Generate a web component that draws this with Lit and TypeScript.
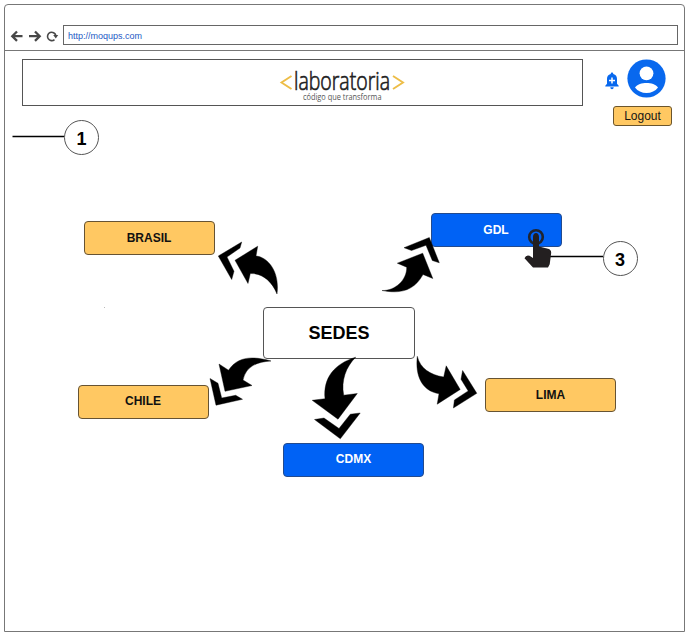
import { LitElement, html, css, svg } from "lit";
import { customElement } from "lit/decorators.js";
import { styleMap } from "lit/directives/style-map.js";

interface Box { label: string; kind: string; x: number; y: number; w: number; h: number; }

// Diagram coordinates are window coordinates; the canvas begins at this origin.
const ORIGIN = { x: 5, y: 127 };

const BOXES: Box[] = [
  { label: "BRASIL", kind: "amber", x: 83.5, y: 221, w: 131, h: 34 },
  { label: "GDL", kind: "blue", x: 430.5, y: 213, w: 131, h: 34 },
  { label: "SEDES", kind: "hub", x: 263, y: 307, w: 152, h: 52 },
  { label: "CHILE", kind: "amber", x: 77.5, y: 384.5, w: 131, h: 34 },
  { label: "LIMA", kind: "amber", x: 485, y: 378, w: 131, h: 34 },
  { label: "CDMX", kind: "blue", x: 283, y: 442.5, w: 141, h: 34 },
  { label: "1", kind: "step", x: 64, y: 120, w: 35, h: 35 },
  { label: "3", kind: "step", x: 602.5, y: 240.5, w: 35, h: 35 },
];

const ARROWS = [
  "M218.300 256L241.700 242L240 248L227 257L234 271.300L231.700 279.500zM235 260.300L257.700 246.200L256 256C268 257 280 272 277 294C272 281 262 273 250.300 273.500L248 283.500z",
  "M429.300 237.500L404 247.700L411.500 250.500L426 245.300L432.300 260.500L439.300 262.800zM422.700 253.200L397.300 263.200L406.700 267.200C407 280 395 291 382 290.500C400 294 414 291 423 274.500L432.800 278.500z",
  "M210 378.500L216 405.200L242.500 399.300L235.700 395.300L221.700 398L218 383.300zM225 391.300L219 364L228.500 370.200C238 356 253 356 271 361C257 362 246 366 243 380L252 385.500z",
  "M340.300 438.800L314.500 419.500L324 418L339 428.500L350.300 414.200L360.200 413zM338 419.200L312.200 400.300L325 398.700C323 378 334 364 355.700 357.200C346 367 341 380 343.700 395.200L357.300 393.500z",
  "M476.800 393.300L462.600 370.500L461 379.300L468.200 390.900L454.400 400L453.400 408zM460.200 389.500L446.200 365.800L443.700 377C430 375 420 368 417.300 356.300C415 376 422 391 439 393.700L437.200 404.200z",
];

@customElement("app-root")
export class AppRoot extends LitElement {
  static styles = css`
    :host {
      display: block;
      box-sizing: border-box;
      width: 691px;
      height: 641px;
      padding: 4px 0 0 4px;
      background: #fff;
      overflow: hidden;
      font-family: "Liberation Sans", Arial, sans-serif;
    }
    * { box-sizing: border-box; }
    svg { display: block; overflow: visible; }
    .window {
      width: 681px;
      height: 628px;
      border: 1px solid #777;
      border-radius: 4px 4px 0 0;
      display: flex;
      flex-direction: column;
    }
    .toolbar {
      height: 46px;
      flex: none;
      display: flex;
      align-items: flex-end;
      padding: 0 6px 5px 6px;
      border-bottom: 1px solid #777;
    }
    .nav { margin: 0 5px 2px 0; }
    .url {
      flex: 1;
      height: 20px;
      border: 1px solid #666;
      padding-left: 4px;
      font-size: 9px;
      line-height: 20px;
      color: #2459c5;
    }
    .header {
      height: 76px;
      flex: none;
      display: flex;
      padding: 8px 0 0 17px;
    }
    .brand {
      width: 561px;
      height: 47px;
      border: 1px solid #555;
    }
    .logo { font-family: "Open Sans", "Noto Sans", sans-serif; }
    .account {
      width: 67px;
      margin-left: 22px;
      display: flex;
      flex-direction: column;
      align-items: flex-end;
    }
    .icons { display: flex; gap: 8px; align-items: center; margin-right: 6px; }
    .bell { margin-top: 5px; }
    .logout {
      width: 59px;
      height: 20px;
      margin-top: 8px;
      border: 1px solid #6b552c;
      border-radius: 3px;
      background: #ffc862;
      font-size: 12px;
      line-height: 18px;
      text-align: center;
      color: #151515;
    }
    .canvas { position: relative; flex: 1; }
    .ink { position: absolute; inset: 0; pointer-events: none; }
    .node {
      position: absolute;
      display: flex;
      align-items: center;
      justify-content: center;
      border: 1px solid #555;
      border-radius: 4px;
      font-size: 12px;
      font-weight: bold;
      color: #111;
      background: #fff;
    }
    .amber { background: #ffc862; border-color: #665333; padding-bottom: 1px; }
    .blue { background: #0062f5; border-color: #234b8e; color: #fff; padding-bottom: 1px; }
    .hub { font-size: 18px; color: #000; }
    .step { border-radius: 50%; font-size: 18px; padding-top: 4px; color: #000; }
  `;

  render() {
    return html`
      <div class="window">
        <div class="toolbar">
          <svg class="nav" width="47" height="14" viewBox="11 28 47 14" fill="none" stroke="#484848" stroke-width="2.3">
            <path d="M22.500 35.200H12.500M17 30.500L12.300 35.200l4.700 4.700" />
            <path d="M29 35.200h10.500M35 30.500l4.700 4.700-4.700 4.700" />
            <path stroke-width="1.600" d="M54.500 38.600A4.200 4.200 0 1 1 55.800 34.500" />
            <path fill="#484848" stroke="none" d="M53.200 34h5l-2.400 3.500z" />
          </svg>
          <div class="url">http://moqups.com</div>
        </div>
        <div class="header">
          <div class="brand">
            <svg class="logo" width="559" height="45" viewBox="23 60 559 45">
              <g fill="none" stroke="#edbd47" stroke-width="1.900">
                <path d="M291.500 76L281.500 82.500l10 6.500" />
                <path d="M393 76l10 6.500-10 6.500" />
              </g>
              <text x="294" y="89.600" font-size="25.500" font-weight="300" textLength="96"
                lengthAdjust="spacingAndGlyphs" fill="#222" stroke="#222" stroke-width=".7">laboratoria</text>
              <text x="303" y="100" font-size="8.200" textLength="78.500" lengthAdjust="spacingAndGlyphs"
                fill="#555">código que transforma</text>
            </svg>
          </div>
          <div class="account">
            <div class="icons">
              <svg class="bell" width="14" height="18" viewBox="0 0 14 18">
                <path fill="#0868ee" d="M7 .5c.9 0 1.300.6 1.300 1.600C10.900 2.800 12 4.600 12 7v4.700l1.700 2v.9H.3v-.9l1.700-2V7c0-2.400 1.100-4.200 3.700-4.900C5.700 1.100 6.100.5 7 .5zM5.300 15.300h3.400C8.700 17.900 5.300 17.900 5.300 15.300z" />
                <path stroke="#fff" stroke-width="1.500" d="M7 5.500v6M4 8.500h6" />
              </svg>
              <svg width="39" height="39" viewBox="0 0 39 39">
                <circle cx="19.500" cy="19.500" r="19.100" fill="#0868ee" />
                <circle cx="19.500" cy="14.300" r="6.900" fill="#fff" />
                <path fill="#fff" d="M8 28.500C10 25.300 15 24 19.500 24s9.500 1.300 11.500 4.500C28.300 32.100 24.300 34 19.500 34S10.700 32.100 8 28.500z" />
              </svg>
            </div>
            <div class="logout">Logout</div>
          </div>
        </div>
        <div class="canvas">
          ${BOXES.map((b) => html`<div class="node ${b.kind}" style=${styleMap({
            left: `${b.x - ORIGIN.x}px`,
            top: `${b.y - ORIGIN.y}px`,
            width: `${b.w}px`,
            height: `${b.h}px`,
          })}>${b.label}</div>`)}
          <svg class="ink" width="679" height="505" viewBox="5 127 679 505">
            ${ARROWS.map((d) => svg`<path d=${d} stroke="#000" stroke-width=".4" />`)}
            <path stroke="#000" stroke-width="1.700" d="M12.500 136.500H64M550 256.500h53" />
            <circle cx="536" cy="237" r="6.800" fill="none" stroke="#20242e" stroke-width="2.600" />
            <path fill="#231f20" d="M533 237c0-5.500 6-5.500 6 0v9.500l9 2.300q3.300 1 3.200 4l-1.500 11.500-1.700 3.200H533l-8.500-9.300q1.500-3.500 5-2.400l3.500 2.200z" />
            <rect x="104" y="307" width="1" height="1" fill="#bbb" />
          </svg>
        </div>
      </div>
    `;
  }
}
